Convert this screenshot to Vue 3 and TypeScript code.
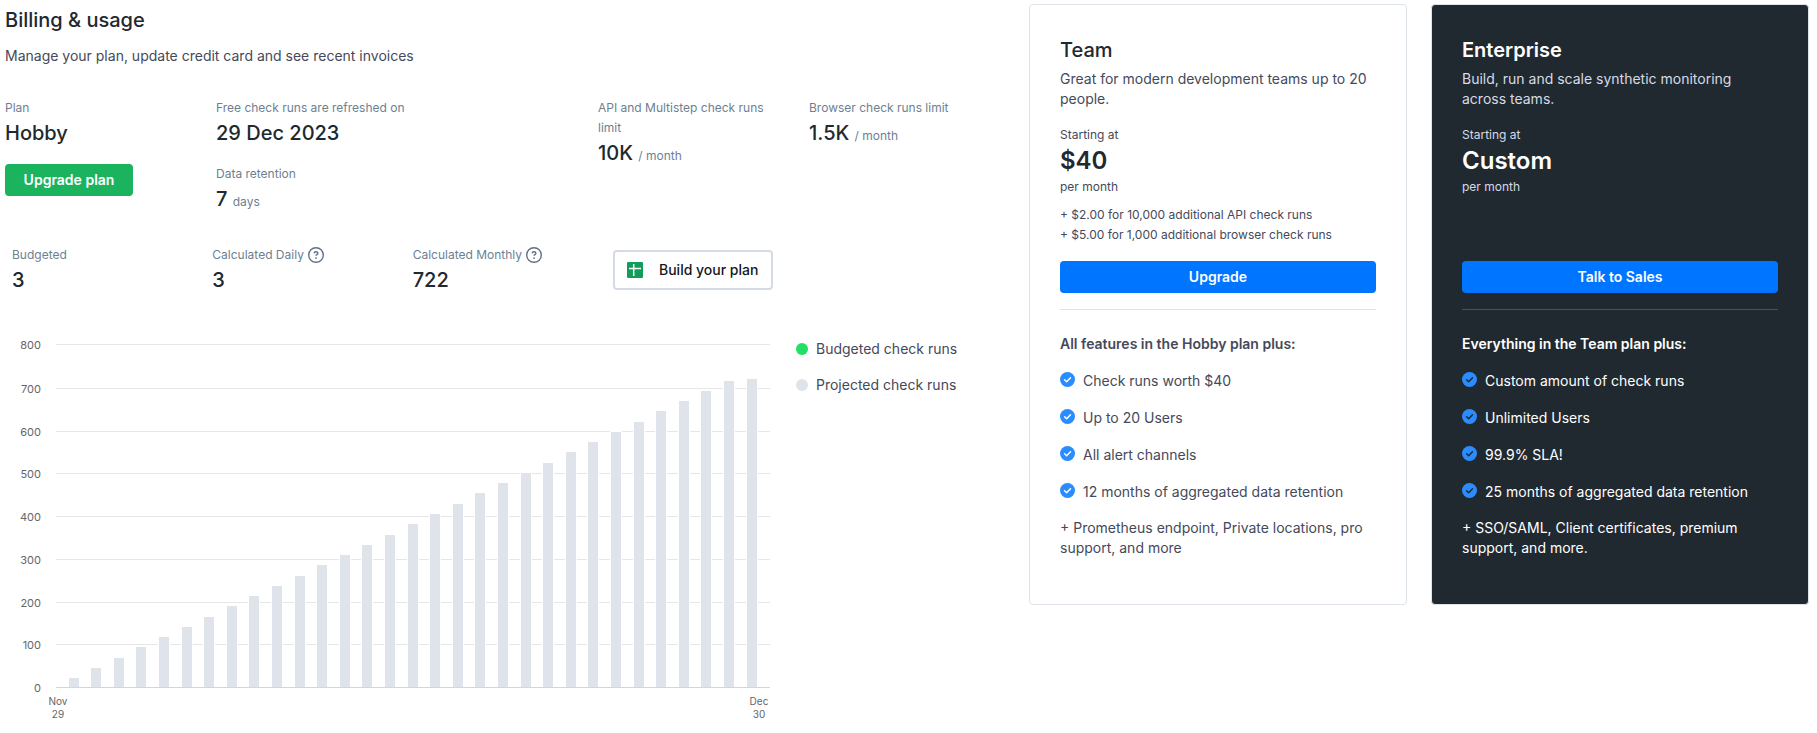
<script setup lang="ts">
interface Feature {
  id: string
  text: string
}

interface PlanCard {
  id: string
  name: string
  description: string
  price: string
  extras: string[]
  action: string
  heading: string
  features: Feature[]
  footnote: string
}

const cards: PlanCard[] = [
  {
    id: 'team',
    name: 'Team',
    description: 'Great for modern development teams up to 20 people.',
    price: '$40',
    extras: [
      '+ $2.00 for 10,000 additional API check runs',
      '+ $5.00 for 1,000 additional browser check runs',
    ],
    action: 'Upgrade',
    heading: 'All features in the Hobby plan plus:',
    features: [
      { id: 'runs', text: 'Check runs worth $40' },
      { id: 'users', text: 'Up to 20 Users' },
      { id: 'alerts', text: 'All alert channels' },
      { id: 'retention', text: '12 months of aggregated data retention' },
    ],
    footnote: '+ Prometheus endpoint, Private locations, pro support, and more',
  },
  {
    id: 'enterprise',
    name: 'Enterprise',
    description: 'Build, run and scale synthetic monitoring across teams.',
    price: 'Custom',
    extras: [],
    action: 'Talk to Sales',
    heading: 'Everything in the Team plan plus:',
    features: [
      { id: 'runs', text: 'Custom amount of check runs' },
      { id: 'users', text: 'Unlimited Users' },
      { id: 'sla', text: '99.9% SLA!' },
      { id: 'retention', text: '25 months of aggregated data retention' },
    ],
    footnote: '+ SSO/SAML, Client certificates, premium support, and more.',
  },
]

const usage = [
  { label: 'Budgeted', value: '3', help: false },
  { label: 'Calculated Daily', value: '3', help: true },
  { label: 'Calculated Monthly', value: '722', help: true },
]

// Chart geometry, in viewBox units
const plot = { left: 51, right: 765, base: 352 }

const ticks = [
  { value: 800, y: 9 },
  { value: 700, y: 53 },
  { value: 600, y: 96 },
  { value: 500, y: 138 },
  { value: 400, y: 181 },
  { value: 300, y: 224 },
  { value: 200, y: 267 },
  { value: 100, y: 309 },
  { value: 0, y: 352 },
]

const bars = Array.from({ length: 31 }, (_, i) => {
  const top = i === 30 ? 44 : Math.floor(353.92 - 10.26 * (i + 1))
  return { x: Math.floor(64.05 + 22.6 * i), y: top, height: plot.base - top }
})
</script>

<template>
  <div class="page">
    <main class="billing">
      <h1>Billing &amp; usage</h1>
      <p class="intro">Manage your plan, update credit card and see recent invoices</p>

      <section class="summary">
        <div class="stack">
          <div>
            <div class="label">Plan</div>
            <div class="value">Hobby</div>
          </div>
          <button type="button" class="btn btn-green">Upgrade plan</button>
        </div>
        <div class="stack">
          <div>
            <div class="label">Free check runs are refreshed on</div>
            <div class="value">29 Dec 2023</div>
          </div>
          <div>
            <div class="label">Data retention</div>
            <div class="value">7 <span class="unit">days</span></div>
          </div>
        </div>
        <div>
          <div class="label">API and Multistep check runs limit</div>
          <div class="value">10K <span class="unit">/ month</span></div>
        </div>
        <div>
          <div class="label">Browser check runs limit</div>
          <div class="value">1.5K <span class="unit">/ month</span></div>
        </div>
      </section>

      <section class="usage">
        <div v-for="item in usage" :key="item.label">
          <div class="label usage-label">
            {{ item.label }}
            <svg v-if="item.help" class="help" viewBox="0 0 16 16" aria-hidden="true">
              <circle cx="8" cy="8" r="7.3" />
              <path d="M6.1 6.4C6.2 5.2 7 4.7 8 4.7s1.9.6 1.9 1.6c0 1.3-1.9 1.3-1.9 2.5" />
              <circle class="dot" cx="8" cy="11.1" r="0.9" />
            </svg>
          </div>
          <div class="value">{{ item.value }}</div>
        </div>
        <button type="button" class="build">
          <svg class="sheet" viewBox="0 0 16 16" aria-hidden="true">
            <rect width="16" height="16" rx="1.2" fill="#0f9d58" />
            <path d="M6.7 2v12M2 6.6h12" stroke="#fff" stroke-width="1.5" />
          </svg>
          <span>Build your plan</span>
        </button>
      </section>

      <section class="chart">
        <svg class="plot" viewBox="0 0 765 390" role="img" aria-label="Check runs per day">
          <g v-for="tick in ticks" :key="tick.value">
            <rect
              v-if="tick.value > 0"
              class="grid"
              :x="plot.left"
              :y="tick.y"
              :width="plot.right - plot.left"
              height="1"
            />
            <text class="tick" x="36" :y="tick.y + 5">{{ tick.value }}</text>
          </g>
          <g v-for="bar in bars" :key="bar.x">
            <rect class="bar-edge" :x="bar.x - 1" :y="bar.y - 1" width="12" :height="bar.height + 1" />
            <rect class="bar" :x="bar.x" :y="bar.y" width="10" :height="bar.height" />
          </g>
          <rect
            class="axis"
            :x="plot.left"
            :y="plot.base"
            :width="plot.right - plot.left"
            height="1"
          />
          <text class="date" x="53" y="370">Nov</text>
          <text class="date" x="53" y="383">29</text>
          <text class="date" x="754" y="370">Dec</text>
          <text class="date" x="754" y="383">30</text>
        </svg>
        <ul class="legend">
          <li><span class="swatch swatch-green"></span>Budgeted check runs</li>
          <li><span class="swatch"></span>Projected check runs</li>
        </ul>
      </section>
    </main>

    <aside class="plans">
      <article v-for="card in cards" :key="card.id" class="card" :class="card.id">
        <h2>{{ card.name }}</h2>
        <p class="description">{{ card.description }}</p>
        <div class="small">Starting at</div>
        <div class="price">{{ card.price }}</div>
        <div class="small">per month</div>
        <div class="extras">
          <div v-for="extra in card.extras" :key="extra">{{ extra }}</div>
        </div>
        <button type="button" class="btn btn-blue">{{ card.action }}</button>
        <hr />
        <h3>{{ card.heading }}</h3>
        <ul class="features">
          <li v-for="feature in card.features" :key="feature.id">
            <svg class="check" viewBox="0 0 15 15" aria-hidden="true">
              <circle cx="7.5" cy="7.5" r="7.5" />
              <path d="M4.6 7.8l2 1.9 3.9-4" />
            </svg>
            <span>{{ feature.text }}</span>
          </li>
        </ul>
        <p class="footnote">{{ card.footnote }}</p>
      </article>
    </aside>
  </div>
</template>

<style>
body {
  margin: 0;
  background: #fff;
}
</style>

<style scoped>
.page {
  display: grid;
  grid-template-columns: 1000fr 780fr;
  gap: 24px;
  align-items: start;
  padding: 4px 8px 8px 5px;
  color: #45495a;
  font-family: Inter, 'Liberation Sans', sans-serif;
  font-size: 14px;
  line-height: 20px;
}

h1,
h2,
h3,
p,
ul {
  margin: 0;
  padding: 0;
  list-style: none;
}

h1,
h2,
.value {
  color: #212930;
  font-size: 20px;
  font-weight: 500;
  line-height: 30px;
}

h1 {
  line-height: 32px;
}

.intro {
  margin-top: 10px;
}

.label,
.unit {
  color: #6d7f92;
  font-size: 12px;
  font-weight: 400;
  line-height: 20px;
}

.summary {
  display: grid;
  grid-template-columns: 187fr 358fr 187fr 196fr;
  gap: 24px;
  margin-top: 32px;
}

.stack {
  display: flex;
  flex-direction: column;
  align-items: flex-start;
  gap: 16px;
}

.btn {
  min-width: 128px;
  height: 32px;
  padding: 0 18px;
  border: 0;
  border-radius: 4px;
  color: #fff;
  font: inherit;
  font-weight: 600;
  cursor: pointer;
}

.btn-green {
  background: #1cb35f;
}

.btn-blue {
  width: 100%;
  background: #0075ff;
}

.usage {
  display: grid;
  grid-template-columns: 1fr 1fr 1fr 160px;
  align-items: center;
  box-sizing: border-box;
  width: 76.8%;
  margin-top: 31px;
  padding-left: 7px;
}

.usage-label {
  display: flex;
  align-items: center;
  gap: 4px;
}

.help {
  width: 16px;
  height: 16px;
  fill: none;
  stroke: #5f7188;
  stroke-width: 1.4;
}

.help .dot {
  fill: #5f7188;
  stroke: none;
}

.build {
  display: flex;
  align-items: center;
  gap: 16px;
  height: 40px;
  padding: 0 12px;
  border: 2px solid #d5dbe6;
  border-radius: 4px;
  background: #fff;
  color: #14181d;
  font: inherit;
  font-weight: 500;
  white-space: nowrap;
  cursor: pointer;
}

.sheet {
  flex: none;
  width: 16px;
  height: 16px;
}

.chart {
  display: grid;
  grid-template-columns: 765fr 209fr;
  gap: 26px;
  align-items: start;
  margin-top: 40px;
}

.plot {
  display: block;
  width: 100%;
  height: auto;
}

.grid {
  fill: #e6e6e6;
}

.axis {
  fill: #ccd6eb;
}

.bar {
  fill: #dfe3ea;
}

.bar-edge {
  fill: #fff;
}

.tick {
  fill: #666;
  font-size: 11px;
  text-anchor: end;
}

.date {
  fill: #666;
  font-size: 10px;
  text-anchor: middle;
}

.legend {
  display: grid;
  gap: 16px;
  padding-top: 4px;
}

.legend li {
  display: flex;
  align-items: center;
  gap: 8px;
}

.swatch {
  width: 12px;
  height: 12px;
  border-radius: 50%;
  background: #dfe3ea;
}

.swatch-green {
  background: #22df66;
}

.plans {
  display: grid;
  grid-template-columns: 1fr 1fr;
  gap: 24px;
}

.card {
  padding: 30px 30px 46px;
  border: 1px solid #dfe3ea;
  border-radius: 4px;
}

.description {
  margin: 4px 0 16px;
}

.small,
.extras {
  font-size: 12px;
}

.price {
  color: #212930;
  font-size: 24px;
  font-weight: 600;
  line-height: 32px;
}

.extras {
  min-height: 40px;
  margin: 8px 0 16px;
}

.card hr {
  margin: 16px 0 24px;
  border: 0;
  border-top: 1px solid #dfe3ea;
}

h3 {
  font-size: 14px;
  font-weight: 600;
}

.features {
  display: grid;
  gap: 17px;
  margin: 17px 0 16px;
}

.features li {
  display: flex;
  align-items: flex-start;
  gap: 8px;
}

.check {
  flex: none;
  width: 15px;
  height: 15px;
  margin-top: 1px;
  fill: #2a8cff;
}

.check path {
  fill: none;
  stroke: #fff;
  stroke-width: 1.5;
  stroke-linecap: round;
  stroke-linejoin: round;
}

.enterprise {
  background: #212930;
  color: #fff;
}

.enterprise h2 {
  font-weight: 600;
}

.enterprise h2,
.enterprise .price {
  color: #fff;
}

.enterprise .description,
.enterprise .small {
  color: #d5dbe6;
}

.enterprise hr {
  border-color: #445562;
}

.enterprise .check path {
  stroke: #212930;
}
</style>
